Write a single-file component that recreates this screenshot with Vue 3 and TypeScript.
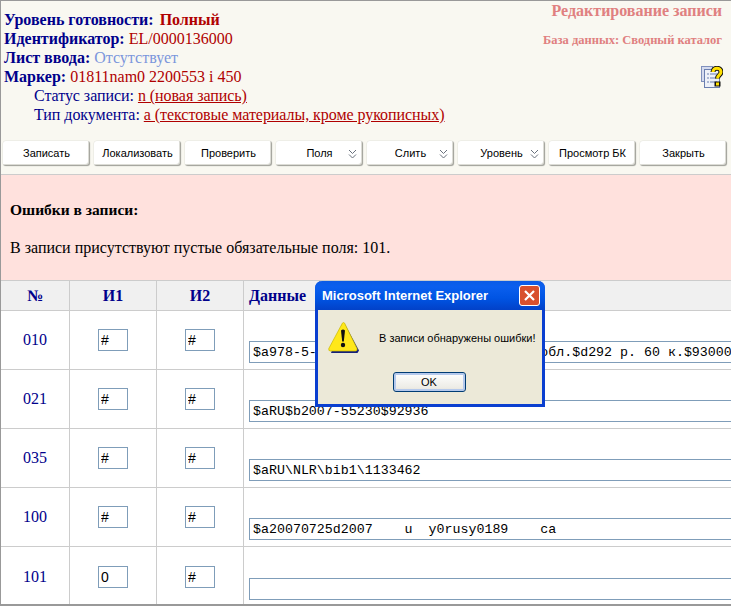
<script setup lang="ts">
interface Btn { label: string; menu?: boolean }
interface Row { tag: string; i1: string; i2: string; data: string }
const buttons: Btn[] = [
  { label: 'Записать' }, { label: 'Локализовать' }, { label: 'Проверить' },
  { label: 'Поля', menu: true }, { label: 'Слить', menu: true }, { label: 'Уровень', menu: true },
  { label: 'Просмотр БК' }, { label: 'Закрыть' },
]
const gap = ' '.repeat(28)
const rows: Row[] = [
  { tag: '010', i1: '#', i2: '#', data: '$a978-5-' + gap + 'обл.$d292 р. 60 к.$93000' },
  { tag: '021', i1: '#', i2: '#', data: '$aRU$b2007-55230$92936' },
  { tag: '035', i1: '#', i2: '#', data: '$aRU\\NLR\\bib1\\1133462' },
  { tag: '100', i1: '#', i2: '#', data: '$a20070725d2007    u  y0rusy0189    ca' },
  { tag: '101', i1: '0', i2: '#', data: '' },
]
</script>

<template>
  <div class="page">
    <header class="head">
      <div class="info">
        <div class="line"><b class="k">Уровень готовности:</b> <b class="v full">Полный</b></div>
        <div class="line"><b class="k">Идентификатор:</b> <span class="v">EL/0000136000</span></div>
        <div class="line"><b class="k">Лист ввода:</b> <span class="absent">Отсутствует</span></div>
        <div class="line"><b class="k">Маркер:</b> <span class="v">01811nam0 2200553 i 450</span></div>
        <div class="line sub">Статус записи: <u class="v">n (новая запись)</u></div>
        <div class="line sub">Тип документа: <u class="v">a (текстовые материалы, кроме рукописных)</u></div>
      </div>
      <div class="side">
        <div class="title">Редактирование записи</div>
        <div class="db">База данных: Сводный каталог</div>
        <svg class="help" width="22" height="22" viewBox="0 0 22 22">
          <rect x="0.500" y="0.500" width="11" height="15" fill="#d5dbee" stroke="#8090bc"/>
          <rect x="3.500" y="3.500" width="15" height="18" fill="#eef1f8" stroke="#6b7fb0"/>
          <path d="M6 8h2M6 12h2M6 16h2M9 8h7M9 12h7M9 16h7" stroke="#6b7fb0"/>
          <path d="M12 6c0-5 8-5 8 0 0 3-3.500 3-3.500 6.500" fill="none" stroke="#111" stroke-width="5"/>
          <rect x="13.500" y="15.500" width="6" height="5" fill="#111"/>
          <path d="M12 6c0-5 8-5 8 0 0 3-3.500 3-3.500 6.500" fill="none" stroke="#ffe000" stroke-width="3"/>
          <rect x="15" y="16.500" width="3" height="3" fill="#ffe000"/>
        </svg>
      </div>
    </header>
    <nav class="bar">
      <button v-for="b in buttons" :key="b.label" class="tb" :class="{ menu: b.menu }" type="button">
        <span>{{ b.label }}</span>
        <svg v-if="b.menu" class="chev" width="9" height="10" viewBox="0 0 9 10">
          <path d="M1 1l3.500 3.500L8 1M1 5.500 4.500 9 8 5.500" fill="none" stroke="#68707c"/>
        </svg>
      </button>
    </nav>
    <section class="errors">
      <p class="et">Ошибки в записи:</p>
      <p class="ed">В записи присутствуют пустые обязательные поля: 101.</p>
    </section>
    <div class="grid">
      <div class="cell th">№</div>
      <div class="cell th">И1</div>
      <div class="cell th">И2</div>
      <div class="cell th left">Данные</div>
      <template v-for="r in rows" :key="r.tag">
        <div class="cell tag">{{ r.tag }}</div>
        <div class="cell"><input class="ind" :value="r.i1" /></div>
        <div class="cell"><input class="ind" :value="r.i2" /></div>
        <div class="cell data"><input class="val" :value="r.data" /></div>
      </template>
    </div>
    <div class="dlg">
      <div class="cap">
        <span>Microsoft Internet Explorer</span>
        <span class="x">
          <svg width="13" height="13" viewBox="0 0 13 13"><path d="M2 2l9 9M11 2l-9 9" stroke="#fff" stroke-width="2.200"/></svg>
        </span>
      </div>
      <div class="body">
        <div class="msg">
          <svg width="32" height="32" viewBox="0 0 32 32">
            <path d="M14 2.500h3L31 28.500l-1.500 2.500H3z" fill="#14207a"/>
            <path d="M14.500 1 .8 26.500q-.6 2.500 1.700 2.500h25q2 0 1.500-2.500L16.500 1q-1-1-2 0z" fill="#ffe81a" stroke="#c9b800" stroke-width=".7"/>
            <path d="M13 8.500q2-2 4 0l-1.200 11h-1.600z" fill="#111"/>
            <circle cx="15" cy="23" r="2.200" fill="#111"/>
          </svg>
          <span>В записи обнаружены ошибки!</span>
        </div>
        <button class="ok" type="button">OK</button>
      </div>
    </div>
  </div>
</template>

<style scoped>
.page {
  position: relative;
  width: 731px;
  height: 606px;
  box-sizing: border-box;
  border: 1px solid #999;
  border-right: 0;
  border-bottom: 2px solid #999;
  background: #fff;
  overflow: hidden;
  font-family: "Liberation Serif", serif;
}
.head {
  display: flex;
  justify-content: space-between;
  height: 140px;
  box-sizing: border-box;
  padding: 9px 9px 0 3px;
  background: #f9f8f1;
}
.line { height: 19px; font-size: 16px; line-height: 19px; color: #00008b; white-space: pre-wrap; }
.sub { padding-left: 30px; letter-spacing: -.05px; }
.k { color: #00008b; }
.v { color: #b00000; }
.full { margin-left: 2px; }
.absent { color: #7b96dc; }
.side { display: flex; flex-direction: column; align-items: flex-end; }
.title { margin-top: -8px; font-size: 16px; font-weight: 700; line-height: 18px; color: #e08080; }
.db { margin-top: 12px; font-size: 12.500px; font-weight: 700; line-height: 16px; color: #e08080; }
.help { margin-top: 18px; margin-right: -1px; }
.bar {
  display: flex;
  gap: 4px;
  height: 34px;
  padding: 0 4px 0 2px;
  box-sizing: border-box;
  background: #f9f8f1;
  border-bottom: 1px solid #ccc;
}
.tb {
  position: relative;
  flex: 1 1 0;
  height: 25px;
  margin: 0;
  padding: 0 0 1px;
  border: 0;
  border-radius: 3px;
  background: #fff;
  box-shadow: inset -1px -1px 0 #a7a7a0, inset -2px -2px 0 #dcdcd6, 0 0 0 .5px #e4e4de;
  font: 11px/24px "Liberation Sans", sans-serif;
  color: #000;
}
.chev { position: absolute; right: 6px; top: 8px; }
.errors {
  height: 105px;
  box-sizing: border-box;
  padding: 26px 9px 0;
  background: #ffe1dd;
  font-size: 16px;
  line-height: 18px;
  color: #000;
}
.et { margin: 0; font-size: 15.500px; font-weight: 700; }
.ed { margin: 20px 0 0; }
.grid {
  display: grid;
  grid-template-columns: 69px 87px 87px 1fr;
  grid-template-rows: 30px repeat(5, 59px);
  border-top: 1px solid #ccc;
}
.cell {
  display: flex;
  align-items: center;
  justify-content: center;
  box-sizing: border-box;
  min-width: 0;
  border-right: 1px solid #ccc;
  border-bottom: 1px solid #ccc;
}
.cell:nth-child(4n) { border-right: 0; }
.grid > .cell:nth-last-child(-n+4) { border-bottom: 0; }
.th { background: #f0f0f0; font-size: 16px; font-weight: 700; color: #00008b; }
.left { justify-content: flex-start; padding-left: 5px; }
.tag { font-size: 16px; color: #00008b; }
.ind {
  width: 30px;
  height: 22px;
  box-sizing: border-box;
  padding: 0 2px;
  border: 1px solid #7f9db9;
  background: #fff;
  outline: 0;
  font: 14px "Liberation Sans", sans-serif;
  color: #000;
}
.data { justify-content: flex-start; align-items: flex-end; padding: 0 0 6px 5px; }
.val {
  flex: none;
  width: 520px;
  height: 22px;
  box-sizing: border-box;
  padding: 0 3px;
  border: 1px solid #7f9db9;
  background: #fff;
  outline: 0;
  font: 13.300px "Liberation Mono", monospace;
  white-space: pre;
  color: #000;
}
.dlg {
  position: absolute;
  left: 314px;
  top: 280px;
  width: 230px;
  height: 126px;
  box-sizing: border-box;
  border: 3px solid #0a3fd0;
  border-top: 0;
  border-radius: 7px 7px 0 0;
  background: #ece9d8;
}
.cap {
  display: flex;
  align-items: center;
  justify-content: space-between;
  height: 29px;
  margin: 0 -3px;
  padding: 0 5px 0 7px;
  border-radius: 7px 7px 0 0;
  background: linear-gradient(#0a5be6, #0a5fee 20%, #0054e3 60%, #0241c8);
  font: 700 13px "Liberation Sans", sans-serif;
  color: #fff;
}
.x {
  display: flex;
  align-items: center;
  justify-content: center;
  width: 21px;
  height: 21px;
  box-sizing: border-box;
  border: 1px solid #fff;
  border-radius: 3px;
  background: #d8502e;
}
.body { display: flex; flex-direction: column; align-items: center; }
.msg {
  display: flex;
  align-items: center;
  gap: 19px;
  width: 100%;
  box-sizing: border-box;
  padding: 0 0 0 10px;
  height: 55px;
  font: 11px "Liberation Sans", sans-serif;
  color: #000;
}
.ok {
  width: 73px;
  height: 20px;
  margin: 7px 2px 0 0;
  padding: 0;
  border: 1px solid #003c74;
  border-radius: 3px;
  background: linear-gradient(#fff, #ecebe5 85%, #d6d0c5);
  box-shadow: inset 0 0 0 2px #b5c9ec;
  font: 11px "Liberation Sans", sans-serif;
  color: #000;
}
</style>
<style>
html, body { margin: 0; background: #fff; }
</style>
